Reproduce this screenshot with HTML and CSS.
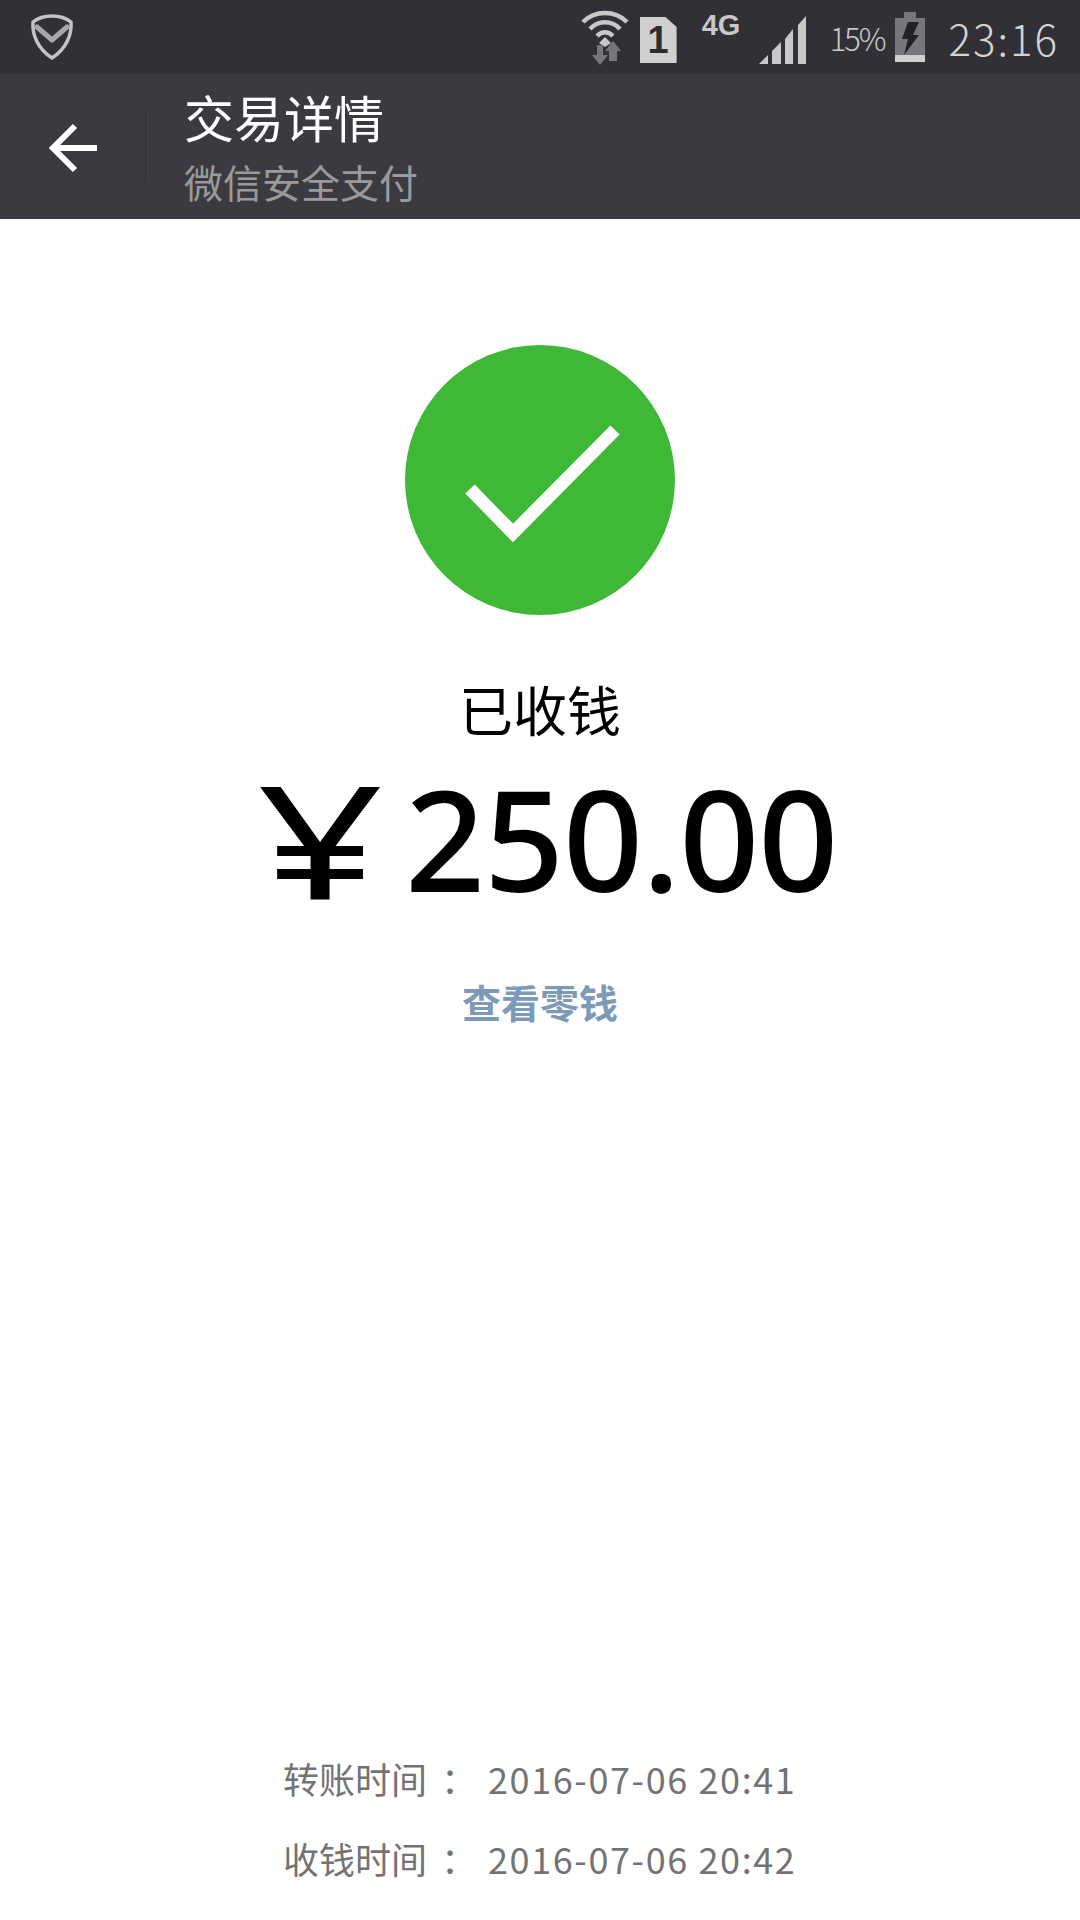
FILE: index.html
```html
<!DOCTYPE html>
<html lang="zh-CN">
<head>
  <meta charset="UTF-8" />
  <title>交易详情</title>
  <link rel="stylesheet" href="styles.css">
</head>
<body>
  <div class="screen">

    <!-- status bar -->
    <div class="status-bar">
      <svg class="shield" width="44" height="48" viewBox="0 0 44 48" fill="none" stroke="#c4c4c4" stroke-width="3.5" stroke-linejoin="round" stroke-linecap="round">
        <path d="M22 3 C29 3 36 5 41 9 C42 22 36 36 22 45 C8 36 2 22 3 9 C8 5 15 3 22 3 Z" />
        <path d="M7 14 L22 27 L37 14" stroke-width="5" stroke="#a8a8a8" />
      </svg>
      <div class="status-right">
        <svg class="wifi" width="50" height="56" viewBox="0 0 50 56" fill="none">
          <path d="M3 13 C15 1 35 1 47 13" stroke="#c8c8c8" stroke-width="4.5" />
          <path d="M10 20 C18 11 32 11 40 20" stroke="#c8c8c8" stroke-width="4.5" />
          <path d="M17 27 C22 22 28 22 33 27" stroke="#c8c8c8" stroke-width="4.5" />
          <path d="M25 28 L31 34 L25 38 L19 34 Z" fill="#c8c8c8" />
          <path d="M17 36 H23 V46 H28 L20 56 L12 46 H17 Z" fill="#77767a" />
          <path d="M33 32 L41 42 H37 V52 H29 V42 H25 Z" fill="#77767a" />
        </svg>
        <div class="sim">1</div>
        <div class="net">4G</div>
        <svg class="signal" width="48" height="50" viewBox="0 0 48 50" fill="#c8c8c8">
          <path d="M0 50 L9 41 V50 Z" />
          <path d="M13 37 L22 28 V50 H13 Z" />
          <path d="M26 25 L34 15 V50 H26 Z" />
          <path d="M39 11 L47 2 V50 H39 Z" />
        </svg>
        <span class="pct">15%</span>
        <svg class="battery" width="30" height="50" viewBox="0 0 30 50">
          <rect x="9" y="0" width="12" height="6" fill="#77767a" />
          <rect x="0" y="6" width="30" height="37" fill="#77767a" />
          <rect x="0" y="43" width="30" height="7" fill="#d0d0d0" />
          <path d="M13 10 H24 L18 23 H24 L9 43 L13 27 H7 Z" fill="#222126" />
        </svg>
        <span class="clock">23:16</span>
      </div>
    </div>

    <!-- nav bar -->
    <div class="nav-bar">
      <div class="back">
        <svg width="50" height="50" viewBox="0 0 50 50" fill="none" stroke="#fff" stroke-width="6">
          <path d="M49 25 H5" />
          <path d="M27 3 L5 25 L27 47" />
        </svg>
      </div>
      <div class="nav-divider"></div>
      <div class="nav-titles">
        <div class="nav-title">交易详情</div>
        <div class="nav-sub">微信安全支付</div>
      </div>
    </div>

    <!-- body -->
    <div class="content">
      <div class="check-circle">
        <svg width="270" height="270" viewBox="0 0 270 270" fill="none" stroke="#fff" stroke-width="13" stroke-linejoin="miter">
          <path d="M65 144 L108 188 L210 85" />
        </svg>
      </div>
      <div class="state">已收钱</div>
      <div class="amount"><span class="yen">¥</span><span class="digits">250.00</span></div>
      <a class="change-link">查看零钱</a>
    </div>

    <!-- times -->
    <div class="times">
      <div class="time-row"><span class="time-label">转账时间<span class="colon">：</span></span><span class="time-value">2016-07-06 20:41</span></div>
      <div class="time-row"><span class="time-label">收钱时间<span class="colon">：</span></span><span class="time-value">2016-07-06 20:42</span></div>
    </div>

  </div>
</body>
</html>
```

FILE: styles.css
```css
body {
  margin: 0;
  background: #fff;
  font-family: "Noto Sans CJK SC", "Noto Sans", sans-serif;
}
.screen {
  width: 1080px;
  height: 1920px;
  display: flex;
  flex-direction: column;
  overflow: hidden;
}
.status-bar {
  height: 74px;
  background: #313036;
  display: flex;
  align-items: center;
  justify-content: space-between;
  padding: 0 21px 0 30px;
  box-sizing: border-box;
}
.status-right {
  display: flex;
  align-items: center;
}
.wifi {
  margin-right: 10px;
}
.sim {
  width: 37px;
  height: 46px;
  background: #d0d0d0;
  color: #2c2b30;
  font: bold 38px/46px "Liberation Sans", sans-serif;
  text-align: center;
  clip-path: polygon(0 0, 70% 0, 100% 22%, 100% 100%, 0 100%);
  margin-top: 6px;
}
.net {
  width: 42px;
  margin: 0 0 24px 25px;
  color: #c8c8c8;
  font: bold 29px/30px "Liberation Sans", sans-serif;
}
.signal {
  margin: 4px 0 0 15px;
}
.pct {
  margin-left: 23px;
  color: #c8c8c8;
  font-size: 31px;
  font-weight: 300;
  letter-spacing: -2px;
}
.battery {
  margin-left: 10px;
}
.clock {
  margin-left: 24px;
  color: #d4d4d4;
  font-size: 42px;
  font-weight: 300;
  letter-spacing: 2px;
}
.nav-bar {
  height: 145px;
  background: #3b3a40;
  display: flex;
  align-items: center;
  box-sizing: border-box;
}
.back {
  width: 145px;
  display: flex;
  justify-content: center;
  padding-top: 2px;
}
.nav-divider {
  width: 1px;
  height: 72px;
  background: #2e2d32;
}
.nav-titles {
  margin-left: 38px;
}
.nav-title {
  color: #fff;
  font-size: 50px;
  line-height: 54px;
}
.nav-sub {
  color: #9a9a9c;
  font-size: 39px;
  line-height: 54px;
  margin-top: 11px;
  margin-bottom: -4px;
}
.content {
  flex: 1;
  display: flex;
  flex-direction: column;
  align-items: center;
}
.check-circle {
  width: 270px;
  height: 270px;
  margin-top: 126px;
  border-radius: 50%;
  background: #3fb838;
}
.state {
  margin-top: 56px;
  font-size: 54px;
  line-height: 76px;
  color: #000;
}
.amount {
  margin-top: 6px;
  display: flex;
  align-items: center;
  color: #000;
  font-family: "Noto Sans", sans-serif;
  font-size: 140px;
  line-height: 170px;
}
.yen {
  display: inline-block;
  font-size: 158px;
  transform: scaleX(1.4);
  margin: 0 40px 0 32px;
}
.digits {
  font-weight: 500;
  letter-spacing: -1px;
}
.change-link {
  margin-top: 50px;
  color: #7d9ab8;
  font-size: 39px;
  font-weight: 700;
  line-height: 56px;
}
.times {
  height: 182px;
  padding-left: 283px;
  color: #737373;
  font-size: 36px;
  line-height: 80px;
}
.time-row {
  display: flex;
}
.time-label {
  width: 205px;
}
.colon {
  margin-left: 14px;
}
.time-value {
  letter-spacing: 1.6px;
}
```
